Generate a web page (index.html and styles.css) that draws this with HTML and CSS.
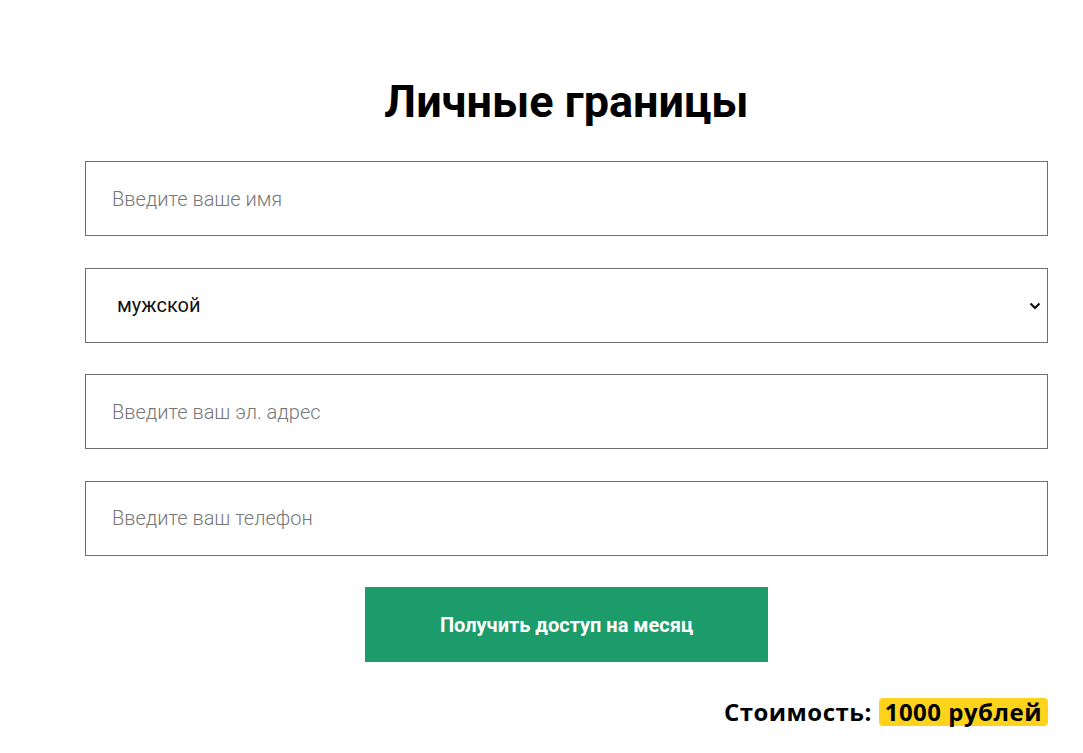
FILE: index.html
```html
<!DOCTYPE html>
<html lang="ru">
<head>
<meta charset="utf-8">
<title>Личные границы</title>
<link rel="stylesheet" href="styles.css">
</head>
<body>
<main class="page">
  <h1 class="title">Личные границы</h1>
  <form class="form">
    <input class="field" type="text" placeholder="Введите ваше имя">
    <div class="select-wrap">
      <select class="field select">
        <option>мужской</option>
        <option>женский</option>
      </select>
      <svg class="chev" width="12" height="8" viewBox="0 0 12 8"><path d="M1.5 1.5 L6 6 L10.5 1.5" fill="none" stroke="#111" stroke-width="2.2"/></svg>
    </div>
    <input class="field" type="email" placeholder="Введите ваш эл. адрес">
    <input class="field" type="tel" placeholder="Введите ваш телефон">
    <button class="btn" type="button">Получить доступ на месяц</button>
  </form>
  <p class="price">Стоимость: <span class="tag">1000 рублей</span></p>
</main>
</body>
</html>
```

FILE: styles.css
```css
html, body {
  margin: 0;
  padding: 0;
  background: #fff;
}
.page {
  width: 963px;
  margin-left: 85px;
  padding-top: 72px;
  font-family: Roboto, "Liberation Sans", sans-serif;
}
.title {
  margin: 0 0 29px;
  text-align: center;
  font-size: 45px;
  font-weight: 700;
  line-height: 60px;
  color: #000;
}
.form {
  display: flex;
  flex-direction: column;
  gap: 31.5px;
}
.field {
  box-sizing: border-box;
  display: block;
  width: 100%;
  height: 75px;
  margin: 0;
  padding: 0 26px;
  border: 1px solid #6e6e6e;
  border-radius: 0;
  background: #fff;
  font-family: Roboto, "Liberation Sans", sans-serif;
  font-size: 20px;
  font-weight: 300;
  color: #222;
  outline: none;
}
.field::placeholder {
  color: #777;
  font-weight: 300;
}
.select-wrap {
  position: relative;
}
.select {
  appearance: none;
  -webkit-appearance: none;
  padding-left: 31px;
  font-weight: 400;
  color: #111;
}
.chev {
  position: absolute;
  right: 7px;
  top: 34px;
  pointer-events: none;
}
.btn {
  align-self: center;
  width: 403px;
  height: 75px;
  border: none;
  border-radius: 0;
  background: #1b9c6a;
  color: #fff;
  font-family: Roboto, "Liberation Sans", sans-serif;
  font-size: 20px;
  font-weight: 700;
  cursor: pointer;
}
.price {
  margin: 35px 0 0;
  text-align: right;
  font-family: "Open Sans", "Liberation Sans", sans-serif;
  font-size: 24px;
  font-weight: 700;
  line-height: 30px;
  letter-spacing: 0.5px;
  color: #000;
}
.tag {
  display: inline-block;
  background: #fdd31c;
  border-radius: 4px;
  padding: 0 6px;
  line-height: 28px;
}
```
